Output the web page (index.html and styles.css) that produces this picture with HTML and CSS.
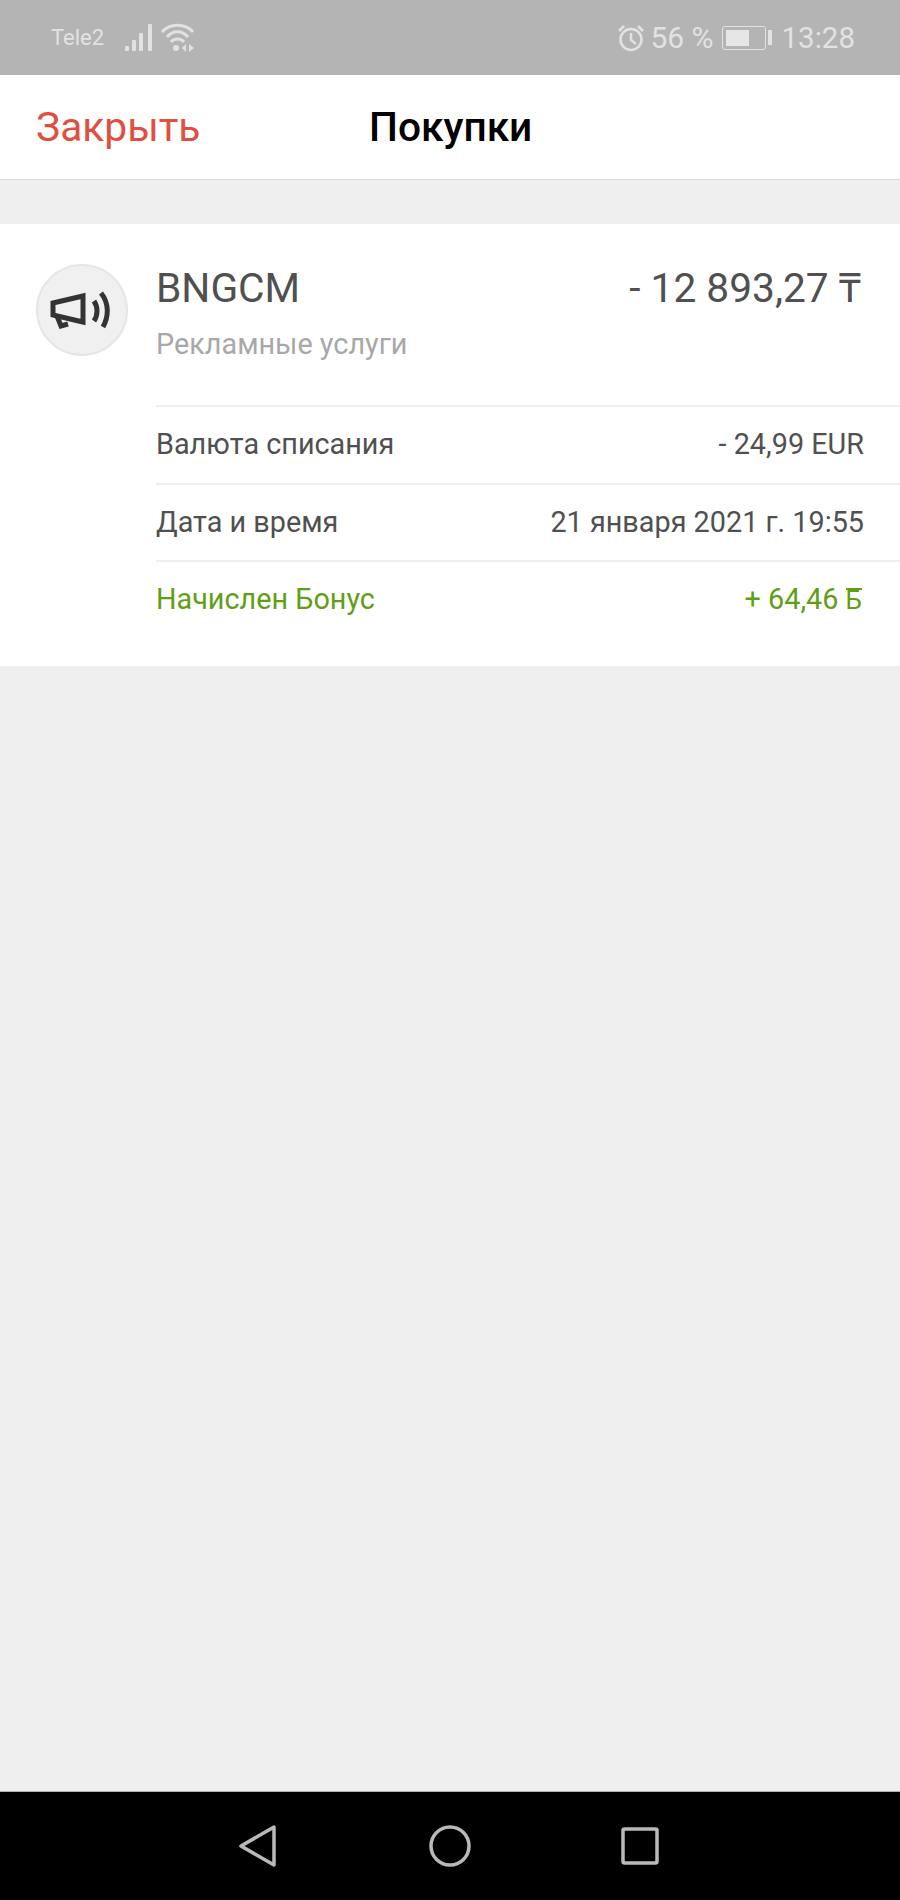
FILE: index.html
```html
<!DOCTYPE html>
<html lang="ru">
<head>
    <meta charset="UTF-8">
    <meta name="viewport" content="width=device-width, initial-scale=1.0">
    <title>Покупки</title>
    <link rel="stylesheet" href="styles.css">
</head>
<body>
    <div class="phone">
        <div class="status-bar">
            <div class="status-left">
                <span class="carrier">Tele2</span>
                <svg class="signal" width="30" height="30" viewBox="0 0 30 30">
                    <rect x="1" y="23" width="4" height="5" rx="1"/>
                    <rect x="8" y="17" width="4" height="11" rx="1"/>
                    <rect x="15" y="10" width="4" height="18" rx="1"/>
                    <rect x="24" y="1" width="4" height="27" rx="1"/>
                </svg>
                <svg class="wifi" width="34" height="30" viewBox="0 0 34 30" fill="none" stroke="#e2e2e2" stroke-width="3">
                    <path d="M1 9 C9 0 24 0 32 9"/>
                    <path d="M6 14 C12 7 21 7 27 14"/>
                    <path d="M10 19 C13 15 20 15 23 19"/>
                    <circle cx="15" cy="25" r="3" fill="#e2e2e2" stroke="none"/>
                    <path d="M25 21 L21 25 L25 29 Z" fill="#e2e2e2" stroke="none"/>
                    <path d="M28 21 L33 25 L28 29 Z" fill="#e2e2e2" stroke="none"/>
                </svg>
            </div>
            <div class="status-right">
                <svg class="alarm" width="28" height="28" viewBox="0 0 28 28" fill="none" stroke="#e2e2e2" stroke-width="2.600">
                    <circle cx="14" cy="15.500" r="10.500"/>
                    <path d="M14 9 V16 L19 20"/>
                    <path d="M2 7 L7 2"/>
                    <path d="M26 7 L21 2"/>
                </svg>
                <span class="percent">56 %</span>
                <div class="battery">
                    <div class="battery-body"><div class="battery-fill"></div></div>
                    <div class="battery-cap"></div>
                </div>
                <span class="clock">13:28</span>
            </div>
        </div>

        <header class="top-bar">
            <span class="close-link">Закрыть</span>
            <h1 class="title">Покупки</h1>
        </header>

        <main class="content">
            <section class="card">
                <div class="icon-col">
                    <div class="icon-circle">
                        <svg class="megaphone" width="60" height="38" viewBox="0 0 60 38" fill="none" stroke="#333" stroke-width="5">
                            <path d="M3 12 L33 5 V31 L3 24 Z" stroke-linejoin="miter"/>
                            <path d="M7 25 L11 35 L18 33"/>
                            <path d="M44 10 C48 16 48 24 44 30"/>
                            <path d="M51 2 C59 12 59 25 53 36"/>
                        </svg>
                    </div>
                </div>
                <div class="details">
                    <div class="summary">
                        <div class="summary-line">
                            <span class="merchant">BNGCM</span>
                            <span class="amount">- 12 893,27 ₸</span>
                        </div>
                        <div class="category">Рекламные услуги</div>
                    </div>
                    <div class="row">
                        <span>Валюта списания</span>
                        <span>- 24,99 EUR</span>
                    </div>
                    <div class="row">
                        <span>Дата и время</span>
                        <span>21 января 2021 г. 19:55</span>
                    </div>
                    <div class="row row-bonus">
                        <span>Начислен Бонус</span>
                        <span>+ 64,46 <span class="bonus-sign">Б</span></span>
                    </div>
                </div>
            </section>
        </main>

        <nav class="nav-bar">
            <svg width="38" height="44" viewBox="0 0 38 44" fill="none" stroke="#b9b9b9" stroke-width="3.500" stroke-linejoin="round">
                <path d="M2 22 L35 3 V41 Z"/>
            </svg>
            <svg width="42" height="42" viewBox="0 0 42 42" fill="none" stroke="#b9b9b9" stroke-width="3.500">
                <circle cx="21" cy="21" r="19"/>
            </svg>
            <svg class="nav-square" width="38" height="38" viewBox="0 0 38 38" fill="none" stroke="#b9b9b9" stroke-width="3.500" stroke-linejoin="round">
                <rect x="2" y="2" width="34" height="34" rx="1.500"/>
            </svg>
        </nav>
    </div>
</body>
</html>
```

FILE: styles.css
```css
* {
    box-sizing: border-box;
}
body {
    margin: 0;
    font-family: Roboto, "Noto Sans", sans-serif;
    background-color: #efefef;
}
.phone {
    width: 900px;
    height: 1900px;
    display: flex;
    flex-direction: column;
}
.status-bar {
    height: 75px;
    background-color: #b4b4b4;
    color: #e2e2e2;
    display: flex;
    justify-content: space-between;
    align-items: center;
    padding: 0 45px 0 51px;
}
.status-left, .status-right {
    display: flex;
    align-items: center;
}
.carrier {
    font-size: 22px;
    margin-right: 20px;
}
.signal {
    fill: #e2e2e2;
    margin-right: 7px;
}
.alarm {
    margin-right: 5px;
}
.percent {
    font-size: 30px;
    margin-right: 8px;
}
.battery {
    display: flex;
    align-items: center;
    margin-right: 10px;
}
.battery-body {
    width: 44px;
    height: 24px;
    border: 1px solid #e2e2e2;
    border-radius: 3px;
    padding: 3px;
}
.battery-fill {
    width: 23px;
    height: 100%;
    background-color: #e6e6e6;
}
.battery-cap {
    width: 4px;
    height: 15px;
    margin-left: 2px;
    background-color: #e2e2e2;
}
.clock {
    font-size: 29.500px;
}
.top-bar {
    height: 105px;
    background-color: #fff;
    border-bottom: 1px solid #d9d9d9;
    display: flex;
    align-items: center;
    padding-left: 36px;
}
.close-link {
    font-size: 40.700px;
    color: #e04f3f;
    width: 333px;
}
.title {
    margin: 0;
    font-size: 40.700px;
    font-weight: 500;
    color: #000;
}
.content {
    flex: 1;
    padding-top: 44px;
}
.card {
    height: 442px;
    background-color: #fff;
    display: flex;
}
.icon-col {
    width: 156px;
    padding: 40px 0 0 36px;
}
.icon-circle {
    width: 92px;
    height: 92px;
    border-radius: 50%;
    background-color: #f0f0f0;
    border: 2px solid #e6e6e6;
    display: flex;
    align-items: center;
    justify-content: center;
}
.megaphone {
    margin-right: 5px;
}
.details {
    flex: 1;
    display: flex;
    flex-direction: column;
}
.summary {
    height: 181px;
    padding: 34px 36px 0 0;
}
.summary-line {
    display: flex;
    justify-content: space-between;
    align-items: baseline;
    color: #505050;
}
.merchant {
    font-size: 40.700px;
}
.amount {
    font-size: 40.700px;
    margin-right: 3px;
}
.category {
    margin-top: 13px;
    font-size: 28.800px;
    color: #a8a8a8;
}
.row {
    height: 77.500px;
    border-top: 2px solid #efefef;
    display: flex;
    justify-content: space-between;
    align-items: center;
    padding-right: 36px;
    padding-bottom: 1px;
    font-size: 28.800px;
    color: #505050;
}
.row-bonus {
    color: #5f9f16;
}
.bonus-sign {
    display: inline-block;
    font-size: 26px;
    line-height: 20px;
    margin-right: 2px;
    border-top: 2px solid #5f9f16;
}
.nav-bar {
    height: 109px;
    background-color: #000;
    border-top: 1px solid #b0b0b0;
    display: flex;
    align-items: center;
    padding-left: 239px;
    gap: 152px;
}
.nav-square {
    margin-left: -2px;
}
```
